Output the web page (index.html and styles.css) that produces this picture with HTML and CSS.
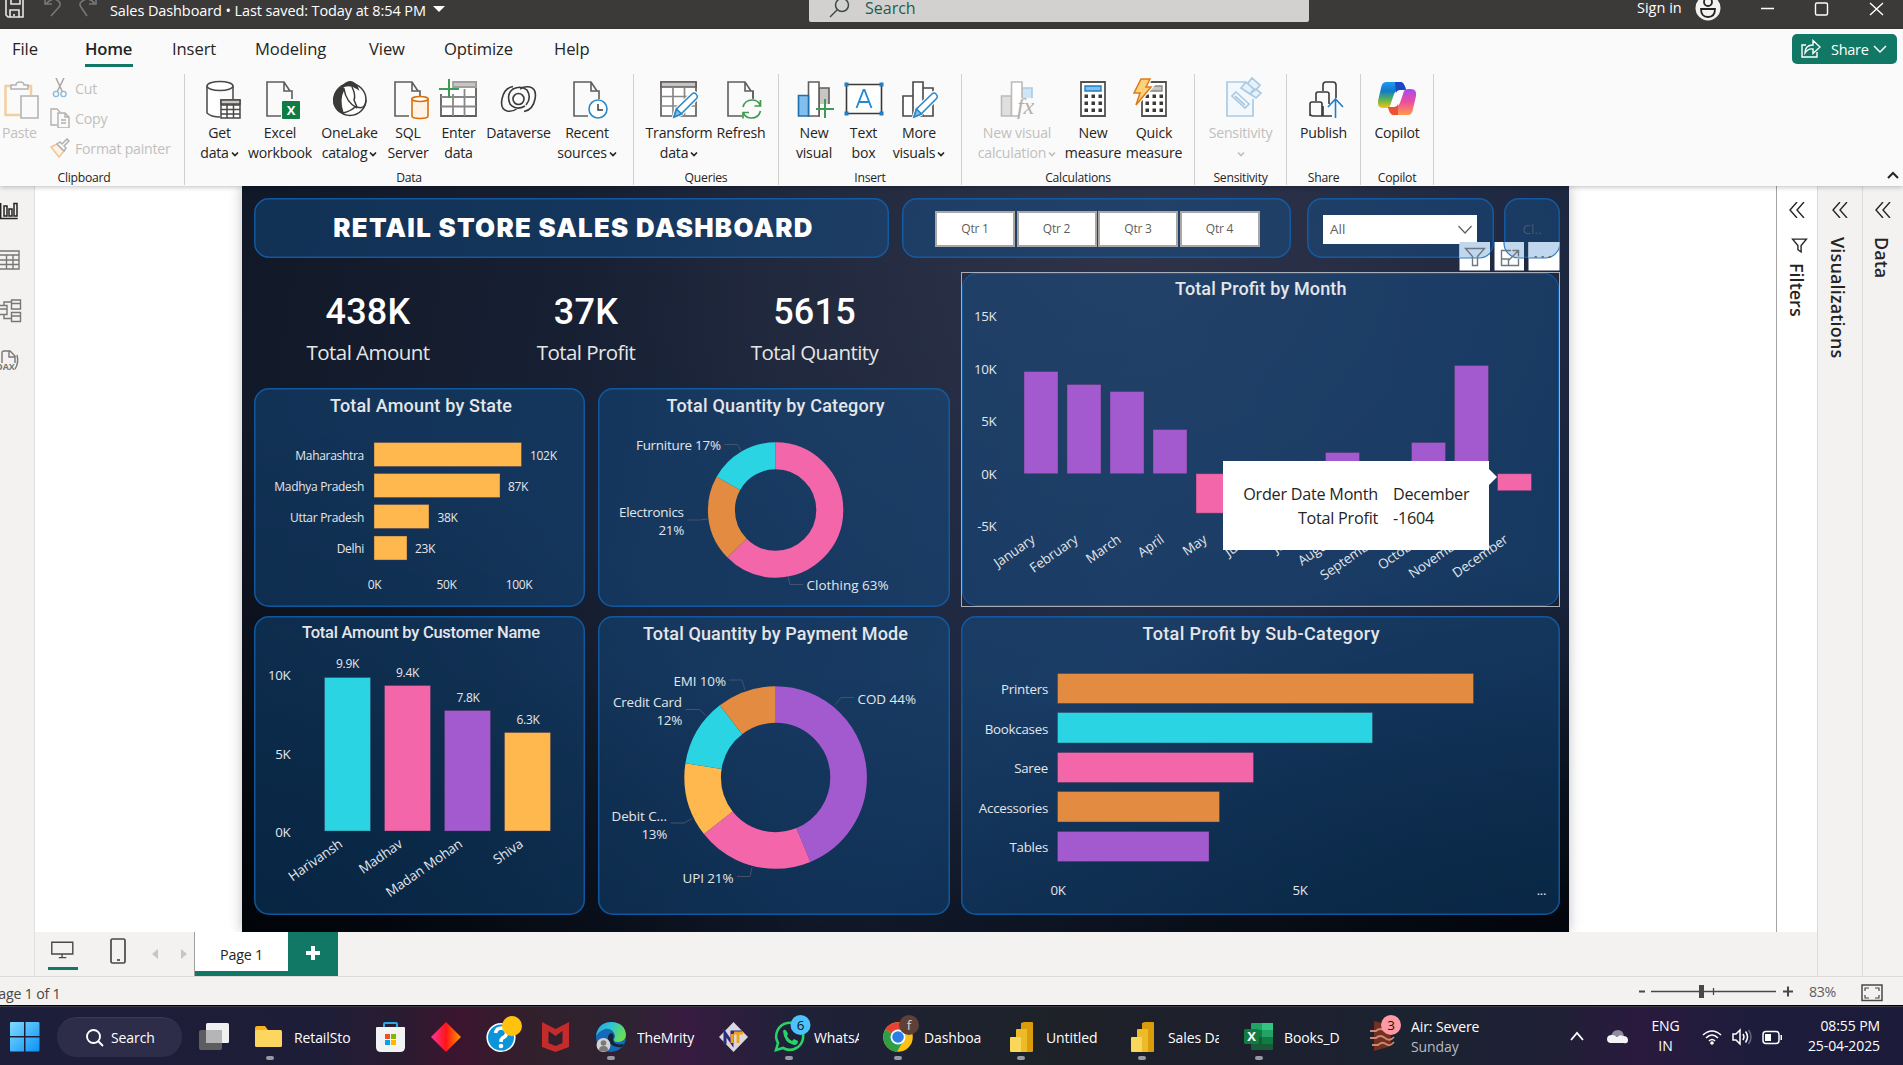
FILE: index.html
```html
<!DOCTYPE html>
<html lang="en">
<head>
<meta charset="utf-8">
<title>Sales Dashboard</title>
<link rel="stylesheet" href="styles.css">
</head>
<body>
<svg class="defs" width="0" height="0" aria-hidden="true">
  <defs>
    <symbol id="page" viewBox="0 0 40 40"><path d="M7 2h17l8 9v25H7z" fill="#fafafa"/><path d="M30 11 24 2H7v34h14M24 2v9h8v8" fill="none" stroke="currentColor" stroke-width="1.6"/></symbol>
    <symbol id="pencil" viewBox="0 0 40 40"><path d="M15 37l2.500-8L33 14q2-2 4 0t1 4L22 34z" fill="#eef6fc" stroke="#fafafa" stroke-width="4"/><path d="M15 37l2.500-8L33 14q2-2 4 0t1 4L22 34z" fill="#fff" stroke="#2b88c8" stroke-width="1.500"/><path d="M15 37l2.500-8 5 5z" fill="#83beec" stroke="#2b88c8"/></symbol>
    <symbol id="down" viewBox="0 0 8 8"><path d="M1 2.500l3 3 3-3" fill="none" stroke="currentColor" stroke-width="1.700"/></symbol>
    <symbol id="chevrons" viewBox="0 0 16 16"><path d="M8 0L1 8l7 8M15 0L8 8l7 8" fill="none" stroke="#252423" stroke-width="1.400"/></symbol>
    <symbol id="powerbi" viewBox="0 0 30 30"><path d="M14 0h8q1 0 1 1v28q0 1-1 1H11V1z" fill="#d99c0b"/><path d="M6 8q0-1 1-1h9q1 0 1 1v22H6z" fill="#eebb28"/><path d="M0 16q0-1 1-1h9q1 0 1 1v14H1q-1 0-1-1z" fill="#f8d75b"/></symbol>
    <symbol id="calc" viewBox="0 0 40 40"><path d="M8 2h24v34H8z" fill="#fff" stroke="#55514f" stroke-width="1.800"/><path d="M11.500 14.500h3.500v3.500h-3.500zm7 0h3.500v3.500h-3.500zm7 0h3.500v3.500h-3.500zM11.500 21.500h3.500v3.500h-3.500zm7 0h3.500v3.500h-3.500zm7 0h3.500v3.500h-3.500zM11.500 28.500h3.500v3.500h-3.500zm7 0h3.500v3.500h-3.500zm7 0h3.500v3.500h-3.500z" fill="#3b3a39"/></symbol>
    <linearGradient id="win" x1="0" y1="0" x2="1" y2="1"><stop stop-color="#7fdcff"/><stop offset="1" stop-color="#0a91f5"/></linearGradient>
    <linearGradient id="cop1" x1="0" y1="0" x2="0" y2="1"><stop stop-color="#1c9bf0"/><stop offset=".35" stop-color="#1478c8"/><stop offset=".65" stop-color="#52b05c"/><stop offset="1" stop-color="#f2c60d"/></linearGradient>
    <linearGradient id="cop2" x1="0" y1="0" x2="0" y2="1"><stop stop-color="#a84bf0"/><stop offset=".5" stop-color="#ec4f9b"/><stop offset="1" stop-color="#ff9a4a"/></linearGradient>
    <linearGradient id="gem" x1="0" y1="0" x2="1" y2="0"><stop stop-color="#ff35a0"/><stop offset=".5" stop-color="#ff1418"/><stop offset="1" stop-color="#ff9800"/></linearGradient>
    <linearGradient id="edge" x1="0" y1="0" x2="1" y2=".4"><stop stop-color="#2ba3e4"/><stop offset=".5" stop-color="#2fc3d2"/><stop offset="1" stop-color="#67de57"/></linearGradient>
  </defs>
</svg>

<header class="titlebar">
  <svg class="quick" width="100" height="20" viewBox="0 0 100 20" fill="none" stroke-width="1.600"><path d="M6-5v20l2 2h15V-5M10 17v-7h9v7M11-2v6h9v-6M14 14v2" stroke="#e6e6e6"/><path d="M45-2v6h7M46 4Q52-3 57 0t2 7l-8 9M96-2v6h-7M95 4Q90-3 84 0t-3 7l6 9" stroke="#797775"/></svg>
  <div class="doc">Sales Dashboard • Last saved: Today at 8:54 PM</div>
  <svg class="doc-caret" width="12" height="6"><path d="M0 0h12L6 6z" fill="#fff"/></svg>
  <div class="search"><svg width="22" height="20" viewBox="0 0 22 20" fill="none" stroke="#3b4a46" stroke-width="1.500"><circle cx="13" cy="5" r="6.500"/><path d="M8 10l-7 7"/></svg><span>Search</span></div>
  <div class="signin">Sign in</div>
  <svg class="avatar" width="26" height="22" viewBox="0 0 26 22"><circle cx="13" cy="8" r="12.500" fill="#f3f2f1"/><g fill="none" stroke="#252423" stroke-width="1.800"><circle cx="13" cy="2" r="4"/><path d="M6 9h14q0 8-7 8t-7-8z"/></g></svg>
  <svg class="winctl" width="125" height="20" viewBox="0 0 125 20" fill="none" stroke="#fff" stroke-width="1.400"><path d="M1 8.500h13M110 3l13 12M123 3l-13 12"/><rect x="55.500" y="3" width="12" height="12" rx="1.500"/></svg>
</header>

<section class="ribbon">
  <nav class="tabs"><span>File</span><span class="on"><b>Home</b></span><span>Insert</span><span>Modeling</span><span>View</span><span>Optimize</span><span>Help</span>
    <button class="share"><svg width="20" height="20" viewBox="0 0 20 20" fill="none" stroke="#fff" stroke-width="1.400"><path d="M5 6H1v12h15v-5M4 14Q4 6 12 6V1.500L19 8l-7 6.500V10Q7 9 4 14z"/></svg>Share<svg width="14" height="9" viewBox="0 0 14 9" fill="none" stroke="#fff" stroke-width="1.500"><path d="M1 1l6 6 6-6"/></svg></button>
  </nav>
  <div class="groups">
    <div class="group clip">
      <div class="body">
        <div class="paste"><svg width="40" height="40" viewBox="0 0 40 40" fill="none" stroke-width="1.600"><path d="M10 6H5.500v29H20M27 6h4v9" stroke="#f3cfa0" stroke-width="2.500"/><path d="M11 9V5h5q0-3 4-3t4 3h4v4zM21 16h17v22H21z" stroke="#b5b3b1" fill="#fafafa"/></svg><span>Paste</span></div>
        <ul class="mini">
          <li><svg width="20" height="20" viewBox="0 0 20 20" fill="none"><path d="M6 0l6.500 14M14 0L7 14" stroke="#a9a7a5" stroke-width="1.500"/><circle cx="6" cy="16" r="2.600" stroke="#8dbbdc" stroke-width="1.400"/><circle cx="13.500" cy="16" r="2.600" stroke="#8dbbdc" stroke-width="1.400"/></svg>Cut</li>
          <li><svg width="20" height="20" viewBox="0 0 20 20" fill="#fafafa" stroke="#b3b0ae" stroke-width="1.400"><path d="M7 17H1V1h6l3 3M8 5h7l4 4v11H8zM15 5v4h4M11 12h5M11 15h5"/></svg>Copy</li>
          <li><svg width="20" height="20" viewBox="0 0 20 20" fill="none" stroke-width="1.500"><path d="M1 9l6-3 7 7-5 6z" stroke="#efc596" fill="#fdf1e4"/><path d="M7 6l3-2 2 2 5-5 2 2-5 5 2 2-2 3z" stroke="#b3b0ae" fill="#fafafa"/></svg>Format painter</li>
        </ul>
      </div>
      <h2>Clipboard</h2>
    </div>
    <div class="group data">
      <div class="body">
        <div class="btn" style="width:53px"><svg width="40" height="40" fill="#fff" stroke="#4a4846" stroke-width="1.500"><path d="M7 6v27q0 3 11 4V9z" stroke="none"/><path d="M7 6v27q4 4 13 4M33 6v13" fill="none"/><ellipse cx="20" cy="6" rx="13" ry="4.500"/><path d="M21 20h19v18H21zM21 25h19M21 29.500h19M21 34h19M27 24v14M33.500 24v14"/><path d="M21 20h19v4H21z" fill="#c8c6c4"/></svg><span>Get<br>data<svg class="dn"><use href="#down"/></svg></span></div>
        <div class="btn" style="width:68px"><svg width="40" height="40"><use href="#page"/><rect x="22" y="21" width="18" height="18" rx="1" fill="#107c41"/><text x="31" y="35" class="xl">X</text></svg><span>Excel<br>workbook</span></div>
        <div class="btn" style="width:71px"><svg width="40" height="40" fill="none" stroke="#3b3a39" stroke-width="1.500"><circle cx="20" cy="19.500" r="16" fill="#fff"/><path d="M12 7Q20-3 27 6l1 3Q20 3 12 7z" fill="#3b3a39"/><path d="M12 7Q2 13 4 24q3 8 9 9Q8 20 14 9z" fill="#3b3a39"/><path d="M14 9q2 13 13 19M22 7q4 8 2 13l3 7q8 3 9-7M13 33q8-2 12-6"/></svg><span>OneLake<br>catalog<svg class="dn"><use href="#down"/></svg></span></div>
        <div class="btn" style="width:46px"><svg width="40" height="40"><use href="#page"/><path d="M24 19v17q0 2.500 8 2.500t8-2.500V19z" fill="#fff3e6" stroke="#d9700c" stroke-width="1.600"/><ellipse cx="32" cy="19" rx="8" ry="2.500" fill="#fff" stroke="#d9700c" stroke-width="1.600"/></svg><span>SQL<br>Server</span></div>
        <div class="btn" style="width:55px"><svg width="40" height="40" fill="none" stroke="#605e5c" stroke-width="1.800"><path d="M2 14v22h35V2H14" fill="#fff"/><path d="M14 2h23v5H14z" fill="#c8c6c4" stroke="#a19f9d"/><path d="M2 17h35M2 26.500h35M14 14v22M25.500 9v27" stroke="#8a8886"/><path d="M10-1v19M0 9h20" stroke="#3f9a52" stroke-width="2"/></svg><span>Enter<br>data</span></div>
        <div class="btn" style="width:65px"><svg width="40" height="40" fill="none" stroke="#3b3a39" stroke-width="1.600"><circle cx="19.500" cy="19" r="5.500"/><path d="M26 26Q17 31 11 24 7 14 14 9q8-4 14 1 5 8-1 15M8 31q-7-2-5-12Q5 8 14 6.500M8 31q6 1 10-2.500M31 7q7 2 5 12-2 11-11 12.500M31 7q-6-1-10 2"/></svg><span>Dataverse</span></div>
        <div class="btn" style="width:72px"><svg width="40" height="40"><use href="#page"/><circle cx="31" cy="29" r="9" fill="#fff" stroke="#2b88c8" stroke-width="1.600"/><path d="M31 24v6h5" fill="none" stroke="#3b3a39" stroke-width="1.500"/></svg><span>Recent<br>sources<svg class="dn"><use href="#down"/></svg></span></div>
      </div>
      <h2>Data</h2>
    </div>
    <div class="group queries">
      <div class="body">
        <div class="btn" style="width:66px"><svg width="40" height="40" fill="none" stroke="#605e5c" stroke-width="1.700"><path d="M2 2h35v34H2z" fill="#fff"/><path d="M2 2h35v5H2z" fill="#c8c6c4"/><path d="M2 16.500h35M2 26h35M14 7v29M25.500 7v29" stroke="#8a8886"/><use href="#pencil"/></svg><span>Transform<br>data<svg class="dn"><use href="#down"/></svg></span></div>
        <div class="btn" style="width:58px"><svg width="40" height="40"><use href="#page"/><path d="M21 18h19v21H21z" fill="#fafafa"/><path d="M32 11v8" stroke="#605e5c" stroke-width="1.600"/><path d="M22 27q2-7 9-7 6 0 8 5M39.500 20v6h-6M39.500 31q-2 7-9 7-6 0-8-5M22 38.500v-6h6" fill="none" stroke="#3f9a52" stroke-width="1.700"/></svg><span>Refresh</span></div>
      </div>
      <h2>Queries</h2>
    </div>
    <div class="group insert">
      <div class="body">
        <div class="btn" style="width:44px"><svg width="40" height="40" stroke="#605e5c" stroke-width="1.600"><path d="M25 8h10v28H25z" fill="#c8c6c4"/><path d="M14.500 2H25v34H14.500z" fill="#fff"/><path d="M4.500 15.500h10V36h-10z" fill="#83beec" stroke="#1d6fae"/><path d="M26 24h14v14H26z" fill="#fafafa" stroke="none"/><path d="M31 19v19M22 29h18" stroke="#3f9a52" stroke-width="2"/></svg><span>New<br>visual</span></div>
        <div class="btn" style="width:55px"><svg width="40" height="40"><path d="M2.500 4.500h35v29h-35z" fill="#fff" stroke="#3b3a39" stroke-width="1.600"/><path d="M.5 2.500h4v4h-4zm35 0h4v4h-4zm-35 29h4v4h-4zm35 0h4v4h-4z" fill="#1f7fc4"/><path d="M12.500 28l7-18h1l7 18M15 22h10" fill="none" stroke="#1f8ad2" stroke-width="1.800"/></svg><span>Text<br>box</span></div>
        <div class="btn" style="width:56px"><svg width="40" height="40" fill="#fff" stroke="#4a4846" stroke-width="1.600"><path d="M24 8h10v28H24zM4 16h10v20H4zM14 2h10v34H14z"/><use href="#pencil"/></svg><span>More<br>visuals<svg class="dn"><use href="#down"/></svg></span></div>
      </div>
      <h2>Insert</h2>
    </div>
    <div class="group calcs">
      <div class="body">
        <div class="btn off" style="width:90px"><svg width="40" height="40" stroke="#bdbbb9" stroke-width="1.600"><path d="M25 8h10v12H25z" fill="#cfe4f5" stroke="#a9cbe4"/><path d="M4.500 16h10v20h-10z" fill="#e1dfdd"/><path d="M14.500 2H25v34H14.500z" fill="#fff"/><path d="M22 18h18v20H22z" fill="#fafafa" stroke="none"/><text x="20" y="34" class="fx">fx</text></svg><span>New visual<br>calculation<svg class="dn"><use href="#down"/></svg></span></div>
        <div class="btn" style="width:62px"><svg width="40" height="40"><use href="#calc"/><path d="M12 6h16v5H12z" fill="#83beec" stroke="#1f7fc4" stroke-width="1.400"/></svg><span>New<br>measure</span></div>
        <div class="btn" style="width:60px"><svg width="40" height="40"><use href="#calc"/><path d="M12 6h16v5H12z" fill="#c8c6c4" stroke="#8a8886" stroke-width="1.400"/><path d="M7-1h9l-4 8h5L2 25l4-12H0z" fill="#fcd27b" stroke="#fafafa" stroke-width="4"/><path d="M7-1h9l-4 8h5L2 25l4-12H0z" fill="#fcd27b" stroke="#db7a1c" stroke-width="1.500"/></svg><span>Quick<br>measure</span></div>
      </div>
      <h2>Calculations</h2>
    </div>
    <div class="group sens">
      <div class="body"><div class="btn off" style="width:91px"><svg width="40" height="40" fill="none" stroke="#a9cbe4" stroke-width="1.700"><path d="M24 2H6v34h26V19" fill="#f2f8fc"/><path d="M15 12l13 12-4 4-13-12z" fill="#fafafa"/><path d="M14 16l10 9" /><path d="M20 8l5-6 8 7-4 5zM27 3l4-5 8 7-4 5M29 14l6-5 5 4-5 5z" fill="#e6f1f9"/></svg><span>Sensitivity<br><svg class="dn solo"><use href="#down"/></svg></span></div></div>
      <h2>Sensitivity</h2>
    </div>
    <div class="group pub">
      <div class="body"><div class="btn" style="width:73px"><svg width="40" height="40" fill="none" stroke="#3b3a39" stroke-width="1.600"><path d="M19 11V5q0-3 3-3h7q3 0 3 3v13M12 21v-7q0-2 2-2h9q2 0 2 2v10M6 36V24q0-2 2-2h8q2 0 2 2v12M6 33q0 3 3 3h19M19 36V26"/><path d="M31.500 38V20M24 27l7.500-8 7.500 8" stroke="#1f7fc4"/></svg><span>Publish</span></div></div>
      <h2>Share</h2>
    </div>
    <div class="group cop">
      <div class="body"><div class="btn" style="width:72px"><svg width="40" height="40"><path d="M9 2h14q4 0 6 8h-7q-4 0-6 7l-3 9q-1 2-4 2H6q-6 0-5-7L4 8q1-6 5-6z" fill="url(#cop1)"/><path d="M18 2h6q3 0 5 8h-6q-3 0-4 3z" fill="#1b46c4"/><path d="M31 35H17q-4 0-6-8h7q4 0 6-7l3-9q1-2 4-2h3q6 0 5 7l-3 13q-1 6-5 6z" fill="url(#cop2)"/><path d="M21 35h-5q-3 0-5-8h6q3 0 4-3z" fill="#ee5035"/></svg><span>Copilot</span></div></div>
      <h2>Copilot</h2>
    </div>
    <svg class="collapse" width="12" height="8" viewBox="0 0 12 8"><path d="M1 7l5-5 5 5" fill="none" stroke="#252423" stroke-width="2"/></svg>
  </div>
</section>

<main class="work">
  <aside class="rail">
    <svg width="24" height="180" viewBox="0 200 24 180" fill="none" stroke="#797775" stroke-width="1.400">
      <path d="M.7 203v15.500h17M4 206h3v10H4zM9 209h3v7H9zM14 203.500h3V216h-3z" stroke="#252423" stroke-width="1.500"/>
      <path d="M0 251h19v18H0M0 255h19M0 260h19M0 264.500h19M6.500 255v14M13 255v14"/>
      <path d="M11.500 300h9v9h-9zM11.500 303.500h9M11.500 312.500h9v9h-9zM11.500 316h9M0 305.500h7v9H0M0 309h7M4 305v-3h7.500M4 314.500v4h7.500"/>
      <path d="M2 363v-10q0-2 2-2h6l5 5v7M9 351v6h6M17 355q2 8-2 14"/>
      <text x="-4" y="370" class="dax">DAX</text>
    </svg>
  </aside>
  <div class="center">
    <div class="stage">
      <div class="canvas">
        <div class="row top">
          <div class="card heading">RETAIL STORE SALES DASHBOARD</div>
          <div class="card quarters"><span>Qtr 1</span><span>Qtr 2</span><span>Qtr 3</span><span>Qtr 4</span></div>
          <div class="card pick"><div class="select">All<svg width="14" height="9" viewBox="0 0 14 9" fill="none" stroke="#605e5c" stroke-width="1.200"><path d="M.5 1L7 8l6.500-7"/></svg></div></div>
          <div class="card clear">Cl..</div>
        </div>
        <div class="row middle">
          <div class="left">
            <div class="kpis">
              <div><b>438K</b><span>Total Amount</span></div>
              <div><b>37K</b><span>Total Profit</span></div>
              <div><b class="wide">5615</b><span>Total Quantity</span></div>
            </div>
            <div class="row pair">
              <div class="card w1"><svg viewBox="254 388 331 219" width="331" height="219">
                <text x="330" y="412" textLength="182" class="t">Total Amount by State</text>
                <g class="e s"><text x="364" y="459.500">Maharashtra</text><text x="364" y="490.500">Madhya Pradesh</text><text x="364" y="521.500">Uttar Pradesh</text><text x="364" y="552.500">Delhi</text></g>
                <g class="bar amber"><rect x="374" y="442.500" width="147.500" height="24"/><rect x="374" y="473.500" width="126" height="24"/><rect x="374" y="504.500" width="55" height="24"/><rect x="374" y="536" width="33" height="24"/></g>
                <g class="s"><text x="530" y="459.500">102K</text><text x="508" y="490.500">87K</text><text x="437.500" y="521.500">38K</text><text x="415" y="552.500">23K</text></g>
                <g class="m s"><text x="374.500" y="589">0K</text><text x="446.500" y="589">50K</text><text x="519" y="589">100K</text></g>
              </svg></div>
              <div class="card w2"><svg viewBox="598 388 352 219" width="352" height="219">
                <text x="666.500" y="412" textLength="218" class="t">Total Quantity by Category</text>
                <g class="ring" stroke-width="27" transform="rotate(-90 775.600 510)">
                  <circle cx="775.600" cy="510" r="54.200" pathLength="360" class="pink" stroke-dasharray="225.300 360"/>
                  <circle cx="775.600" cy="510" r="54.200" pathLength="360" class="orange" stroke-dasharray="74.200 360" stroke-dashoffset="-225.300"/>
                  <circle cx="775.600" cy="510" r="54.200" pathLength="360" class="cyan" stroke-dasharray="60.500 360" stroke-dashoffset="-299.500"/>
                </g>
                <path class="lead" d="M724.500 444.500h13l3.500 6.500M687.500 520h12l8-1M788 577l2 7.500h13"/>
                <g class="l"><text x="636" y="450" textLength="85">Furniture 17%</text><text x="619" y="517" textLength="65">Electronics</text><text x="684" y="535" class="e">21%</text><text x="806.500" y="590" textLength="82">Clothing 63%</text></g>
              </svg></div>
            </div>
          </div>
          <div class="month">
            <div class="card"><svg viewBox="961 272 599 335" width="599" height="335">
              <text x="1175" y="295" textLength="171.500" class="t">Total Profit by Month</text>
              <g class="e"><text x="996.500" y="321">15K</text><text x="996.500" y="373.500">10K</text><text x="996.500" y="426">5K</text><text x="996.500" y="479">0K</text><text x="996.500" y="531">-5K</text></g>
              <g class="bar violet"><rect x="1024" y="371.500" width="34" height="102.200"/><rect x="1067" y="384.500" width="34" height="89.200"/><rect x="1110" y="391.500" width="34" height="82.200"/><rect x="1153" y="429.500" width="34" height="44.200"/><rect x="1325.500" y="452.500" width="34" height="21.200"/><rect x="1411.500" y="442.500" width="34" height="31.200"/><rect x="1454.500" y="365.500" width="34" height="108.200"/></g>
              <g class="bar rose"><rect x="1196" y="473.700" width="34" height="39.500"/><rect x="1497.500" y="473.700" width="34" height="17"/></g>
              <g class="e r">
                <text transform="translate(1036 541.500) rotate(-35)">January</text><text transform="translate(1079 541.500) rotate(-35)">February</text><text transform="translate(1122 541.500) rotate(-35)">March</text><text transform="translate(1165 541.500) rotate(-35)">April</text><text transform="translate(1208 541.500) rotate(-35)">May</text><text transform="translate(1251 541.500) rotate(-35)">June</text><text transform="translate(1294 541.500) rotate(-35)">July</text><text transform="translate(1337 541.500) rotate(-35)">August</text><text transform="translate(1380 541.500) rotate(-35)">September</text><text transform="translate(1423 541.500) rotate(-35)">October</text><text transform="translate(1466 541.500) rotate(-35)">November</text><text transform="translate(1509 541.500) rotate(-35)">December</text>
              </g>
            </svg></div>
            <div class="tip"><span>Order Date Month</span><span>December</span><span>Total Profit</span><span>-1604</span></div>
            <svg class="tools" viewBox="1459 242 101 30" width="101" height="30">
              <defs><clipPath id="bx"><path d="M1459.500 242h30.500v28.500h-30.500zM1494.500 242h29.500v28.500h-29.500zM1528.500 242h31v28.500h-31z"/></clipPath></defs>
              <g clip-path="url(#bx)"><rect x="1459" y="242" width="101" height="30" fill="#fff"/>
              <g fill="#c1d7ee" stroke="#2f7cc4" stroke-width="1.200"><rect x="1307" y="198" width="187" height="60" rx="15"/><rect x="1504" y="198" width="56" height="60" rx="15"/></g></g>
              <g fill="none" stroke="#6d7780" stroke-width="1.400"><path d="M1465.500 248.500h19l-7 8v9h-5v-9zM1511 250.500h-9.500v15h17V259M1501.500 259h7v6.500M1509 260l9-9M1512.500 250.500h6v6"/></g>
              <path d="M1534.500 256h2.400v2h-2.400zm7 0h2.400v2h-2.400zm7 0h2.400v2h-2.400z" fill="#6d7780"/>
            </svg>
          </div>
        </div>
        <div class="row bottom">
          <div class="card w1"><svg viewBox="254 616 331 299" width="331" height="299">
            <text x="302" y="637.500" textLength="238" class="t t2">Total Amount by Customer Name</text>
            <g class="e"><text x="290.500" y="680">10K</text><text x="290.500" y="758.500">5K</text><text x="290.500" y="836.500">0K</text></g>
            <g class="m s"><text x="347.500" y="667.500">9.9K</text><text x="407.500" y="676.500">9.4K</text><text x="468" y="701.500">7.8K</text><text x="528" y="723.500">6.3K</text></g>
            <g class="bar"><rect x="324.500" y="677.500" width="46" height="153.500" class="cyan"/><rect x="384.500" y="685.500" width="46" height="145.500" class="pink"/><rect x="444.500" y="710.500" width="46" height="120.500" class="violet"/><rect x="504.500" y="732.500" width="46" height="98.500" class="amber"/></g>
            <g class="e r"><text transform="translate(343.500 846) rotate(-35)">Harivansh</text><text transform="translate(403.500 846) rotate(-35)">Madhav</text><text transform="translate(463.500 846) rotate(-35)">Madan Mohan</text><text transform="translate(524 846) rotate(-35)">Shiva</text></g>
          </svg></div>
          <div class="card w2"><svg viewBox="598 616 352 299" width="352" height="299">
            <text x="643" y="639.500" textLength="265" class="t">Total Quantity by Payment Mode</text>
            <g class="ring" stroke-width="36.600" transform="rotate(-90 775.600 777.500)">
              <circle cx="775.600" cy="777.500" r="73" pathLength="360" class="violet" stroke-dasharray="157.600 360"/>
              <circle cx="775.600" cy="777.500" r="73" pathLength="360" class="pink" stroke-dasharray="74.100 360" stroke-dashoffset="-157.600"/>
              <circle cx="775.600" cy="777.500" r="73" pathLength="360" class="amber" stroke-dasharray="47.300 360" stroke-dashoffset="-231.700"/>
              <circle cx="775.600" cy="777.500" r="73" pathLength="360" class="cyan" stroke-dasharray="43.300 360" stroke-dashoffset="-279"/>
              <circle cx="775.600" cy="777.500" r="73" pathLength="360" class="orange" stroke-dasharray="37.700 360" stroke-dashoffset="-322.300"/>
            </g>
            <path class="lead" d="M729 680h13l3 10M685.500 709.500h14l6 6M835 705l6-7.500h13M671 823h13l8-4.500M737 876.500h13l2-9"/>
            <g class="l"><text x="673.500" y="686" textLength="52.500">EMI 10%</text><text x="613" y="706.500" textLength="69">Credit Card</text><text x="682" y="724.500" class="e">12%</text><text x="857.500" y="703.500" textLength="58.500">COD 44%</text><text x="611.500" y="820.500" textLength="55.500">Debit C...</text><text x="667" y="838.500" class="e">13%</text><text x="682.500" y="882.500" textLength="51">UPI 21%</text></g>
          </svg></div>
          <div class="card w3"><svg viewBox="961 616 599 299" width="599" height="299">
            <text x="1142.500" y="639.500" textLength="237" class="t">Total Profit by Sub-Category</text>
            <g class="e"><text x="1048" y="693.500">Printers</text><text x="1048" y="733.500">Bookcases</text><text x="1048" y="772.500">Saree</text><text x="1048" y="812.500">Accessories</text><text x="1048" y="851.500">Tables</text></g>
            <g class="bar"><rect x="1057.500" y="673.500" width="416" height="30" class="orange"/><rect x="1057.500" y="712.500" width="315" height="30.500" class="cyan"/><rect x="1057.500" y="752.500" width="196" height="30" class="pink"/><rect x="1057.500" y="791.500" width="162" height="30.500" class="orange"/><rect x="1057.500" y="831.500" width="151.500" height="30" class="violet"/></g>
            <g class="m"><text x="1058" y="895">0K</text><text x="1300" y="895">5K</text><text x="1541.500" y="895">...</text></g>
          </svg></div>
        </div>
      </div>
      <aside class="pane filters"><svg width="16" height="16"><use href="#chevrons"/></svg><svg width="17" height="17" viewBox="0 0 15 16"><path d="M1 2h13L9 8v6l-3-2V8z" fill="none" stroke="#252423" stroke-width="1.300"/></svg><b>Filters</b></aside>
    </div>
    <footer class="pages">
      <div class="views">
        <svg class="desk" width="30" height="30" viewBox="0 0 30 30" fill="none" stroke="#4a4846" stroke-width="1.500"><path d="M3 3.500h22.500V16H3zM14 16v4M10.500 20h8"/></svg>
        <svg width="16" height="27" viewBox="0 0 16 27" fill="none" stroke="#4a4846" stroke-width="1.700"><rect x="1" y="1" width="14" height="24" rx="1.500"/><path d="M7 22h3"/></svg>
        <svg width="36" height="12" viewBox="0 0 36 12" fill="#c8c6c4"><path d="M6 1v10L0 6zM29 1v10l6-5z"/></svg>
      </div>
      <div class="tab">Page 1</div><div class="add"><svg width="14" height="14"><path d="M7 0v14M0 7h14" stroke="#fff" stroke-width="4"/></svg></div>
    </footer>
  </div>
  <aside class="pane viz"><svg width="16" height="16"><use href="#chevrons"/></svg><b>Visualizations</b></aside>
  <aside class="pane dat"><svg width="16" height="16"><use href="#chevrons"/></svg><b>Data</b></aside>
</main>

<div class="status"><span class="count">Page 1 of 1</span>
  <svg width="156" height="20" viewBox="0 0 156 20" fill="none" stroke="#4a4846" stroke-width="1.300"><path d="M0 9.500h6M144 9.500h10M149 4.500v10" stroke-width="2"/><path d="M12 9.500h125M74.500 6v7"/><path d="M62.500 3v13" stroke-width="5"/></svg>
  <span class="pct">83%</span>
  <svg width="22" height="18" viewBox="0 0 22 18" fill="none" stroke="#4a4846" stroke-width="1.500"><path d="M1 1h20v15.500H1z"/><path d="M4 7V4h4M14 4h4v3M18 11v3h-4M8 14H4v-3" stroke-width="1.200"/></svg>
</div>

<footer class="taskbar">
  <div><svg width="30" height="30"><path d="M0 1q0-1 1-1h13v14H0zM15.500 0H28q1.500 0 1.500 1v13h-14zM0 15.500h14v14H1q-1 0-1-1zM15.500 15.500h14V28q0 1.500-1.500 1.500H15.500z" fill="url(#win)"/></svg></div>
  <div><span class="pill"><svg width="18" height="18" fill="none" stroke="#fff" stroke-width="1.900"><circle cx="7.500" cy="7.500" r="6.500"/><path d="M12 12l5 5"/></svg>Search</span></div>
  <div><svg width="30" height="30"><rect y="8" width="23" height="20" rx="2" fill="#5d5d60"/><rect x="7" y="1" width="23" height="20" rx="1.500" fill="#f0f0f0"/><path d="M7 8h16v13H7z" fill="#b5b5b8"/></svg></div>
  <div class="run"><svg width="28" height="30"><path d="M0 6q0-2 2-2h8l3 4h13v5H0z" fill="#f5b324"/><rect y="8" width="27" height="17" rx="1.500" fill="#fdd65f"/></svg><span>RetailSto</span><i></i></div>
  <div><svg width="30" height="30"><path d="M8 6V2q0-1 1-1h11q1 0 1 1v4" fill="none" stroke="#2aa9e8" stroke-width="2"/><path d="M0 6q0-1 1-1h27q1 0 1 1v19q0 5-5 5H5q-5 0-5-5z" fill="#f3f3f3"/><path d="M9 12h5v5H9z" fill="#f25022"/><path d="M15 12h5v5h-5z" fill="#7fba00"/><path d="M9 18h5v5H9z" fill="#00a4ef"/><path d="M15 18h5v5h-5z" fill="#ffb900"/></svg></div>
  <div><svg width="30" height="30"><path d="M15 0l15 15-15 15L0 15z" fill="url(#gem)"/></svg></div>
  <div><svg width="38" height="30"><circle cx="15" cy="15.500" r="13.800" fill="#0c94d8" stroke="#fff" stroke-width="1.600"/><path d="M9.500 11q1-5 6-5 6 1 5 6-1 3-4 4-1.500 1-1.500 4" fill="none" stroke="#fff" stroke-width="3.600"/><circle cx="15" cy="24" r="2.300" fill="#fff"/><circle cx="26" cy="4" r="10" fill="#ffc20e"/></svg></div>
  <div><svg width="28" height="30"><path d="M0 0l13.500 7L27 0v25l-13.500 5L0 25zM6.500 9v12l7 3 7-3V9l-7 5z" fill="#c42b2b" fill-rule="evenodd"/></svg></div>
  <div class="run"><svg width="30" height="30"><circle cx="15" cy="15" r="15" fill="#1569b8"/><path d="M0 14Q2 0 16 0q13 1 14 13-1 7-8 7-5 0-4-3 2-2 0-6-3-5-9-4-6 2-9 7z" fill="url(#edge)"/><path d="M17 17q0 7 11 5l-2 3q-10 1-14-6-1-6 3-8 4 1 2 6z" fill="#15243a"/><circle cx="7.500" cy="23" r="7" fill="#d3d2d0"/><circle cx="7.500" cy="21" r="2.800" fill="#7b7977"/><path d="M3 28q0-4 4.500-4t4.500 4q-4 3-9 0z" fill="#7b7977"/></svg><span>TheMrity</span><i></i></div>
  <div><svg width="30" height="30"><path d="M14.500 0L29 15 14.500 30 0 15z" fill="#d8d8de"/><path d="M6 22V11l7 10V10h10" fill="none" stroke="#2c2b80" stroke-width="3"/><path d="M13 21v-9M15 11h9M19 11v10" fill="none" stroke="#f5a01c" stroke-width="2.800"/></svg></div>
  <div class="run"><svg width="37" height="37"><path d="M2 35l2-7A13.500 13.500 0 1 1 9 33z" fill="none" stroke="#25d366" stroke-width="2.600"/><path d="M9 16q2-3 4 1l1 2-1 2q2 4 5 5l2-2 4 2q0 4-4 4-10-2-11-14z" fill="#25d366"/><circle cx="26.500" cy="10" r="10" fill="#4cc2ff"/><text x="26.500" y="15" class="badge">6</text></svg><span class="narrow">WhatsApp</span><i></i></div>
  <div class="run"><svg width="37" height="37"><circle cx="15" cy="22" r="14.800" fill="#fbc116"/><path d="M15 22L2.200 14.600A14.800 14.800 0 0 1 27.800 14.600z" fill="#e94235"/><path d="M15 22L2.200 14.600A14.800 14.800 0 0 0 14 36.800l6.500-11z" fill="#2f9e48"/><circle cx="15" cy="22" r="7.500" fill="#fff"/><circle cx="15" cy="22" r="5.800" fill="#2b7de9"/><circle cx="26" cy="10" r="10" fill="#5d4037"/><text x="26" y="15" class="badge f">f</text></svg><span class="db">Dashboard</span><i></i></div>
  <div class="run bi"><svg width="30" height="30"><use href="#powerbi"/></svg><span class="un">Untitled</span><i></i></div>
  <div class="run bi"><svg width="30" height="30"><use href="#powerbi"/></svg><span class="sd">Sales Dash</span><i></i></div>
  <div class="run"><svg width="30" height="30"><path d="M7 2q0-1 1-1h11v7H7z" fill="#21a366"/><path d="M18 1h11v7H18z" fill="#33c481"/><path d="M7 8h11v7H7z" fill="#107c41"/><path d="M18 8h11v7H18z" fill="#21a366"/><path d="M7 15h11v7H7z" fill="#185c37"/><path d="M18 15h11v7H18z" fill="#107c41"/><path d="M7 22h22v6H7z" fill="#185c37"/><rect y="7" width="15" height="15" rx="1.500" fill="#107c41"/><text x="7.500" y="19" class="xl">X</text></svg><span class="bk">Books_D</span><i></i></div>
  <div class="air"><svg width="37" height="38"><path d="M4 7l8 2 9-3v26L4 37z" fill="#74301f"/><path d="M0 17h6q4-4 9 0t9-1M0 24h6q4-4 9 0t9-1M2 31h6q4-4 8-1t8-2" fill="none" stroke="#c98a79" stroke-width="1.800"/><circle cx="21" cy="11" r="10" fill="#ff99a4"/><text x="21" y="16" class="badge">3</text></svg><span>Air: Severe<br><em>Sunday</em></span></div>
  <div><svg width="14" height="30"><path d="M1 18l6-7 6 7" fill="none" stroke="#fff" stroke-width="1.800"/></svg></div>
  <div><svg width="21" height="30"><path d="M4 15Q5 8 11 8q5 0 6 6z" fill="#8c8c9a"/><path d="M4 21q-4 0-4-4t5-4q3 0 5 2 3-3 6-1 5 0 5 4t-4 3z" fill="#f3f3f6"/></svg></div>
  <div class="lang">ENG<br>IN</div>
  <div><svg width="20" height="30" fill="none" stroke="#fff" stroke-width="1.600"><path d="M1 13q9-8 18 0M4 16q6-6 12 0M7 19q3-3 6 0"/><circle cx="10" cy="21" r="1" fill="#fff"/></svg></div>
  <div><svg width="20" height="30" fill="none" stroke="#fff" stroke-width="1.500"><path d="M1 12h3l4-4v14l-4-4H1zM11 12q2 3 0 6M13.500 9.500q4 5 0 11"/><path d="M16.500 8q5 7 0 14" stroke="#666680"/></svg></div>
  <div><svg width="21" height="30"><rect x="1" y="9.500" width="16" height="12" rx="3" fill="none" stroke="#fff" stroke-width="1.500"/><path d="M3 12h6v7H3zM18.500 13h1.500v5h-1.500z" fill="#fff"/></svg></div>
  <div class="clock">08:55 PM<br>25-04-2025</div>
</footer>
</body>
</html>
```
FILE: styles.css
```css
* { box-sizing: border-box; margin: 0; padding: 0; }
body { width: 1903px; height: 1065px; overflow: hidden; font-family: "Open Sans", "Noto Sans", sans-serif; background: #f3f2f1; color: #252423; display: flex; flex-direction: column; }
svg { display: block; flex: none; }
.defs { position: absolute; }
b { font-weight: 600; }

/* title bar */
.titlebar { height: 29px; flex: none; background: #3b3a39; color: #fff; display: flex; align-items: flex-start; overflow: hidden; line-height: 22px; font-size: 14.500px; white-space: nowrap; }
.quick { margin-right: 10px; }
.doc { width: 323px; letter-spacing: -.1px; }
.doc-caret { margin-top: 6px; }
.search { margin-left: 364px; width: 500px; height: 22px; background: #d2d1cf; border-radius: 0 0 2px 2px; padding-left: 20px; display: flex; gap: 14px; font-size: 16px; line-height: 16px; color: #1b5e50; }
.signin { margin-left: 328px; width: 58px; line-height: 16px; }
.avatar { margin-right: 39px; }

/* ribbon */
.ribbon { height: 157px; flex: none; background: #fafafa; box-shadow: 0 1px 5px rgba(0,0,0,.25); position: relative; z-index: 2; }
.tabs { height: 40px; padding-left: 12px; display: grid; grid-template-columns: 73px 87px 83px 114px 75px 110px 1238px 105px; font-size: 16.600px; letter-spacing: -.1px; line-height: 40px; white-space: nowrap; }
.tabs .on b { display: inline-block; height: 38px; border-bottom: 3px solid #117865; width: 48px; letter-spacing: -.2px; }
.share { margin-top: 5px; height: 30px; border: 0; border-radius: 5px; background: #117865; color: #fff; font: 14.500px "Open Sans", sans-serif; letter-spacing: -.3px; display: flex; align-items: center; padding-left: 9px; gap: 10px; }
.share svg:last-child { margin-left: -5px; }
.groups { display: flex; height: 117px; padding-top: 5px; position: relative; }
.group { height: 111px; border-right: 1px solid #d2d0ce; position: relative; display: flex; flex-direction: column; justify-content: space-between; }
.group h2 { font-size: 12.200px; font-weight: 400; line-height: 15px; text-align: center; letter-spacing: -.25px; }
.body { display: flex; padding-top: 6px; }
.clip { width: 185px; } .clip h2 { padding-right: 16px; }
.data { width: 449px; } .data .body { padding-left: 8px; }
.queries { width: 145px; } .queries .body { padding-left: 12px; }
.insert { width: 183px; } .insert .body { padding-left: 13px; }
.calcs { width: 233px; } .calcs .body { padding-left: 10px; }
.sens { width: 92px; } .pub { width: 74px; } .cop { width: 73px; }
.btn { display: flex; flex-direction: column; align-items: center; font-size: 14.100px; letter-spacing: -.2px; line-height: 20px; text-align: center; white-space: nowrap; }
.btn > svg { overflow: visible; color: #605e5c; }
.btn > span { margin-top: 3px; }
.btn.off { color: #c1bfbd; }
.dn { display: inline-block; width: 8px; height: 8px; margin-left: 2px; vertical-align: 0; }
.dn.solo { margin: 0; }
.xl { font: 700 13px "Open Sans", sans-serif; fill: #fff; stroke: none; text-anchor: middle; }
.fx { font: italic 24px "Liberation Serif", serif; fill: #b3b0ae; stroke: none; }
.paste { width: 45px; font-size: 14.100px; letter-spacing: -.25px; color: #c1bfbd; line-height: 20px; }
.paste span { display: block; margin: 3px 0 0 2px; }
.mini { list-style: none; margin: -7px 0 0 5px; font-size: 14.200px; letter-spacing: -.25px; color: #c1bfbd; white-space: nowrap; }
.mini li { display: flex; align-items: center; gap: 5px; height: 30px; }
.collapse { position: absolute; right: 4px; bottom: 7px; }

/* work area */
.work { flex: none; height: 791px; display: flex; border-bottom: 1px solid #dddbd9; }
.rail { width: 35px; border-right: 1px solid #e1dfdd; padding-top: 14px; }
.dax { font: 700 9px "Open Sans", sans-serif; fill: #797775; stroke: none; }
.center { width: 1782px; display: flex; flex-direction: column; }
.stage { height: 746px; background: #fff; display: flex; justify-content: space-between; overflow: hidden; }
.canvas { margin-left: 207px; width: 1327px; height: 746px; padding: 12px 0 0 12px; box-shadow: 0 0 12px rgba(0,0,0,.25);
  background:
    radial-gradient(ellipse 720px 460px at 100% 112%, rgba(0,3,6,1), rgba(0,3,6,0)),
    radial-gradient(ellipse 560px 560px at 0% 106%, rgba(0,3,6,1), rgba(0,3,6,0)),
    linear-gradient(180deg, rgba(4,10,20,0) 65%, rgba(4,10,20,.55) 100%),
    radial-gradient(ellipse 520px 400px at 66% 10%, rgba(52,54,74,.7), rgba(40,48,74,0)),
    linear-gradient(100deg, #111827 0%, #1b253b 40%, #202b45 65%, #19243c 100%); }
.row { display: flex; }
.card { background: rgba(17,88,152,.4); border-radius: 15px; box-shadow: inset 0 0 0 1.500px rgba(17,98,176,.8); flex: none; }
.top { height: 60px; }
.heading { width: 635px; margin-right: 13px; color: #fff; font: 900 25.800px/60px Inter, sans-serif; text-align: center; letter-spacing: 1.300px; padding-left: 4px; white-space: nowrap; }
.quarters { width: 389px; margin-right: 16px; display: flex; gap: 1.500px; padding: 13px 0 0 33px; }
.quarters span { width: 80px; height: 36px; background: #fff; border: 2px solid #aaa8a5; font-size: 12px; line-height: 32px; letter-spacing: -.2px; text-align: center; color: #605e5c; }
.pick { width: 187px; margin-right: 10px; padding: 17px 0 0 16px; }
.select { width: 154px; height: 29px; background: #fff; color: #605e5c; font-size: 13.500px; line-height: 33px; display: flex; align-items: center; justify-content: space-between; padding: 0 5px 0 7px; }
.clear { width: 56px; text-align: center; font-size: 13.500px; line-height: 63px; color: #4d566a; }
.left { width: 696px; }
.kpis { display: flex; height: 130px; padding-top: 31px; color: #fff; text-align: center; }
.kpis div { width: 228px; } .kpis div:nth-child(2) { width: 208px; } .kpis div:nth-child(3) { width: 249px; }
.kpis b { display: block; font: 500 36px/46px Roboto, sans-serif; letter-spacing: .2px; }
.kpis span { display: block; font-size: 20.500px; line-height: 35px; color: #e6e6e6; letter-spacing: -.55px; }
.w1 { width: 331px; margin-right: 13px; }
.w2 { width: 352px; }
.w3 { width: 599px; margin-left: 11px; }
.month { width: 599px; margin: 14px 0 0 11px; height: 335px; position: relative; }
.month .card { outline: 1.500px solid #a9adb6; outline-offset: -1px; height: 335px; border-radius: 0; background: none; box-shadow: none; position: relative; }
.month .card::before { content: ""; position: absolute; inset: 1px; border-radius: 15px; background: rgba(17,88,152,.4); box-shadow: inset 0 0 0 1px rgba(17,98,176,.8); }
.month .card svg { position: relative; }
.bottom { margin-top: 9px; }

/* charts */
.card text { font-family: "Open Sans", sans-serif; font-size: 13.300px; letter-spacing: -.25px; fill: #e4e6ea; }
.card .s text { font-size: 12px; letter-spacing: -.3px; }
.card .l text { font-size: 13.400px; letter-spacing: 0; }
.card .l text.e { letter-spacing: -.3px; }
.card .r text { font-size: 13.400px; letter-spacing: -.1px; }
.card .t { font: 500 18px Roboto, sans-serif; letter-spacing: 0; }
.card .t2 { font-size: 16.500px; }
.e, .e text { text-anchor: end; }
.m text { text-anchor: middle; }
.bar rect { stroke: rgba(60,50,80,.4); stroke-width: 1; }
.ring { fill: none; }
.ring .pink { stroke: #f366a9; } .ring .orange { stroke: #e38b41; } .ring .cyan { stroke: #2bd4e2; } .ring .violet { stroke: #a45acf; } .ring .amber { stroke: #ffb84d; }
.bar .pink, .rose rect { fill: #f366a9; } .bar .orange { fill: #e38b41; } .bar .cyan { fill: #2bd4e2; } .bar .violet, .violet rect { fill: #a45acf; } .bar .amber, .amber rect { fill: #ffb84d; }
.lead { fill: none; stroke: #44526a; stroke-width: 1; }
.tip { position: absolute; left: 262px; top: 189px; width: 266px; height: 89px; background: #fff; display: grid; grid-template-columns: 155px 1fr; column-gap: 15px; align-content: start; padding-top: 21px; font-size: 16.200px; letter-spacing: -.25px; line-height: 24px; white-space: nowrap; }
.tip span:nth-child(odd) { text-align: right; }
.tip::after { content: ""; position: absolute; left: 266px; top: 8px; border: 8.500px solid transparent; border-right: 0; border-left: 8px solid #fff; }
.tools { position: absolute; left: 498px; top: -30px; }

/* side panes */
.pane { display: flex; flex-direction: column; align-items: center; padding-top: 16px; }
.pane b { writing-mode: vertical-rl; font-size: 18px; line-height: 20px; }
.filters { width: 41px; border-left: 1px solid #a6a4a2; background: #fff; }
.filters svg + svg { margin: 19px 0 9px 5px; }
.viz { width: 45px; border-left: 1px solid #dddbd9; }
.dat { width: 41px; border-left: 1px solid #dddbd9; }
.viz b, .dat b { margin-top: 19px; }
.viz b { margin-right: 5px; letter-spacing: .15px; } .dat b { margin-right: 3px; }

/* page strip and status */
.pages { height: 44px; display: flex; }
.views { width: 160px; padding-left: 13px; display: flex; border-right: 1px solid #a19f9d; }
.desk { margin-top: 7px; height: 31px; border-bottom: 3px solid #117865; }
.desk + svg { margin: 6px 0 0 32px; }
.desk + svg + svg { margin: 16px 0 0 26px; }
.tab { width: 93px; background: #fff; border-bottom: 5px solid #117865; text-align: center; font-size: 14.300px; line-height: 46px; letter-spacing: -.2px; }
.add { width: 50px; background: #117865; display: flex; align-items: center; justify-content: center; padding-bottom: 3px; }
.status { height: 28px; flex: none; display: flex; font-size: 14.200px; color: #484644; line-height: 33px; white-space: nowrap; }
.count { width: 1649px; margin-left: -10px; letter-spacing: -.2px; }
.status svg { margin-top: 5px; }
.status svg:last-child { margin-top: 7px; }
.pct { width: 52px; margin: 0 0 0 14px; line-height: 29px; letter-spacing: -.3px; color: #605e5c; }

/* taskbar */
.taskbar { height: 60px; flex: none; border-top: 1px solid #000; box-shadow: inset 0 1px 0 #3d3d4c; padding: 0 0 0 10px; color: #fff; display: grid; align-items: center; font-size: 14px; letter-spacing: -.1px; white-space: nowrap;
  grid-template-columns: 47px 142px 56px 121px 55px 55px 56px 54px 123px 55px 109px 127px 121px 113px 126px 200px 37px 44px 51px 30px 30px 41px 77px;
  background: linear-gradient(90deg, #1d1e3a 0, #1e1d38 17%, #2a1c30 21%, #3c1530 24%, #31202c 28%, #2e2332 33%, #371b40 36%, #1f2139 42%, #1d222e 50%, #1e2127 56%, #1d1f2e 66%, #1b2331 75%, #201f37 82%, #2a1a3e 86%, #1d1c3b 92%, #1c1c3a 100%); }
.taskbar > div { height: 60px; display: flex; align-items: center; position: relative; padding-top: 2px; }
.taskbar svg { overflow: visible; }
.pill { display: flex; align-items: center; gap: 7px; width: 125px; height: 40px; border-radius: 20px; background: #2d2d49; border-top: 1px solid #3a3a54; padding-left: 29px; }
.run span { margin-left: 11px; width: 58px; overflow: hidden; }
.run i { position: absolute; left: 11px; top: 50px; width: 8px; height: 4px; border-radius: 2px; background: #9b98a4; }
.bi i { left: 7px; }
.run .narrow { margin-left: 3px; width: 45px; }
.run .db { width: 57px; }
.run .un { margin-left: 6px; }
.run .sd { margin-left: 7px; width: 51px; }
.run .bk { margin-left: 10px; width: 60px; }
.taskbar svg[height="37"] { margin-top: -7px; }
.taskbar svg[width="37"] + span:not(.narrow) { margin-left: 4px; }
.air svg[height="38"] { margin-top: -8px; }
.taskbar .air span { margin-left: 0; }
.air span, .lang, .clock { line-height: 20px; }
.air em { font-style: normal; color: #b9bac4; }
.taskbar .lang { display: block; padding-top: 10px; width: 29px; text-align: center; }
.taskbar .clock { display: block; padding-top: 10px; text-align: right; }
.badge { font: 13.500px "Open Sans", sans-serif; text-anchor: middle; fill: #111; }
.badge.f { fill: #ddd0cc; }
```
